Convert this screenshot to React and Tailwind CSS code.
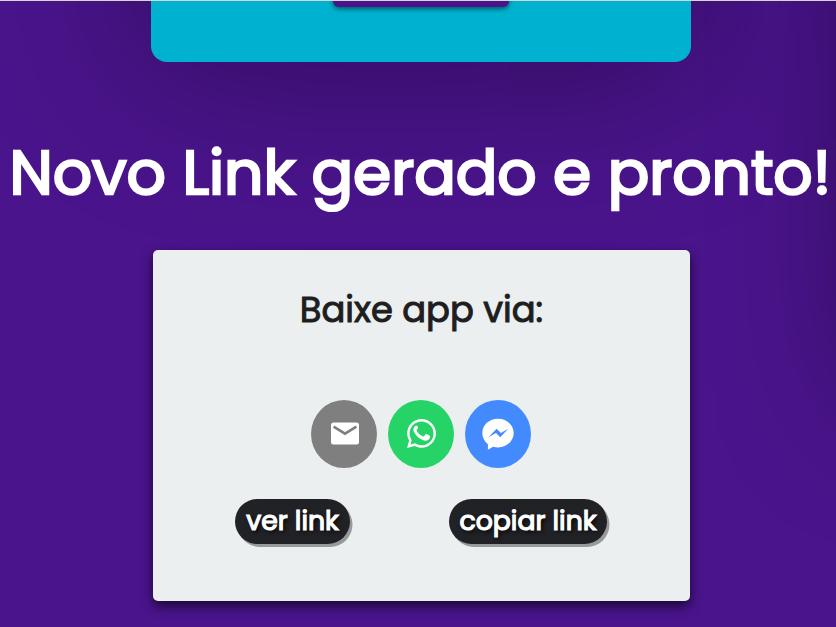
import React from "react";

const font = "font-['Poppins','Inter','Noto_Sans',sans-serif] whitespace-nowrap";

function MailIcon() {
  return (
    <svg viewBox="0 0 28 22" className="ml-0.5 h-[23px] w-7">
      <rect width="28" height="22" rx="2.5" fill="#fff" />
      <path d="M2.6 4.2 14 11.2 25.4 4.2" fill="none" stroke="#7f7f7f" strokeWidth="2.6" />
    </svg>
  );
}

function WhatsAppIcon() {
  return (
    <svg viewBox="0 0 448 512" className="ml-px h-[33px] w-[29px]" fill="#fff">
      <path d="M380.9 97.1C339 55.1 283.2 32 223.9 32c-122.4 0-222 99.6-222 222 0 39.1 10.2 77.3 29.6 111L0 480l117.7-30.9c32.4 17.7 68.9 27 106.1 27h.1c122.3 0 224.1-99.6 224.1-222 0-59.3-25.2-115-67.1-157zm-157 341.6c-33.2 0-65.7-8.9-94-25.7l-6.7-4-69.8 18.3L72 359.2l-4.4-7c-18.5-29.4-28.2-63.3-28.2-98.2 0-101.7 82.8-184.5 184.6-184.5 49.3 0 95.6 19.2 130.4 54.1 34.8 34.9 56.2 81.2 56.1 130.5 0 101.8-84.9 184.6-186.6 184.6z" />
      <path d="M162 148c-6-13-11-11-16-11-14 0-22 3-31 14-12 14-18 30-17 48 2 24 14 46 32 70 27 36 62 66 105 84 31 13 54 18 78 9 20-8 37-22 42-41 3-12 4-23 1-27-4-5-42-23-57-29-6-2-11-1-15 5-7 11-14 20-22 28-5 5-10 5-18 1-44-20-72-47-95-86-4-7-2-12 2-17 7-8 13-14 18-25 2-5 1-10-1-14z" />
    </svg>
  );
}

function MessengerIcon() {
  return (
    <svg viewBox="0 0 32 32" className="h-8 w-8">
      <path d="M16 .8C7.300.8.3 7 .3 15c0 4.600 2.200 8.400 5.600 11.200v5.600l5.200-3c1.600.4 3.200.6 4.900.6 8.700 0 15.700-6.400 15.700-14.400S24.700.8 16 .8Z" fill="#fff" />
      <path d="m6.500 19.300 8.100-8.500 4.300 4.200 7.300-4.200-8 8.500-4.200-4.300Z" fill="#448aff" />
    </svg>
  );
}

function ShareButton({ color, label, children }) {
  return (
    <button aria-label={label} className={`flex h-[68px] w-[66px] items-center justify-center rounded-[50%] pb-px ${color}`}>
      {children}
    </button>
  );
}

function PillButton({ width, children }) {
  return (
    <button
      className={`flex h-[45px] items-center justify-center rounded-full bg-[#212226] text-[26.7px] font-normal text-white shadow-[2.500px_3px_0_#98999b] [-webkit-text-stroke:1.2px_#fff] [text-shadow:2px_2px_4px_#000] ${width}`}
    >
      {children}
    </button>
  );
}

export default function App() {
  return (
    <div className={`relative flex h-[627px] w-[836px] flex-col overflow-hidden bg-[#4a148c] ${font}`}>
      <div className="absolute -top-[400px] left-[872px] h-[790px] w-[540px] rounded-2xl shadow-[0_0_140px_rgba(0,0,0,0.5)]" />
      <div className="relative ml-[151px] h-[62px] w-[540px] shrink-0">
        <div className="-mt-[340px] flex h-[402px] items-end justify-center rounded-2xl bg-[#00b2d0] pb-[55px] shadow-[0_0_170px_rgba(0,0,0,0.42)]">
          <div className="h-10 w-[176px] rounded-md bg-[#4a148c] shadow-[0_2px_5px_rgba(0,0,0,0.5)]" />
        </div>
      </div>
      <h1 className="relative mt-[64px] ml-[9.500px] h-[94px] shrink-0 text-[61.500px] leading-[93px] font-normal text-white [-webkit-text-stroke:2.500px_#fff]">
        Novo Link gerado e pronto!
      </h1>
      <main className="relative mt-[30px] ml-[153px] flex h-[351px] w-[537px] shrink-0 flex-col items-center rounded-[5px] bg-[#ebeff0] shadow-[0_5px_12px_0px_rgba(0,0,0,0.65)]">
        <h2 className="mt-9 h-12 text-[35.300px] leading-[48px] font-normal text-[#1e1e20] [-webkit-text-stroke:1px_#1e1e20]">Baixe app via:</h2>
        <div className="mt-[66px] mr-0.5 flex gap-[11px]">
          <ShareButton label="E-mail" color="bg-[#7f7f7f]"><MailIcon /></ShareButton>
          <ShareButton label="WhatsApp" color="bg-[#25d366]"><WhatsAppIcon /></ShareButton>
          <ShareButton label="Messenger" color="bg-[#448aff]"><MessengerIcon /></ShareButton>
        </div>
        <div className="mt-[31px] flex w-full gap-[99px] pl-[82px]">
          <PillButton width="w-[115px]">ver link</PillButton>
          <PillButton width="w-[158px]">copiar link</PillButton>
        </div>
      </main>
      <div className="absolute inset-x-0 top-0 h-px bg-[#d6d6d6]" />
    </div>
  );
}
